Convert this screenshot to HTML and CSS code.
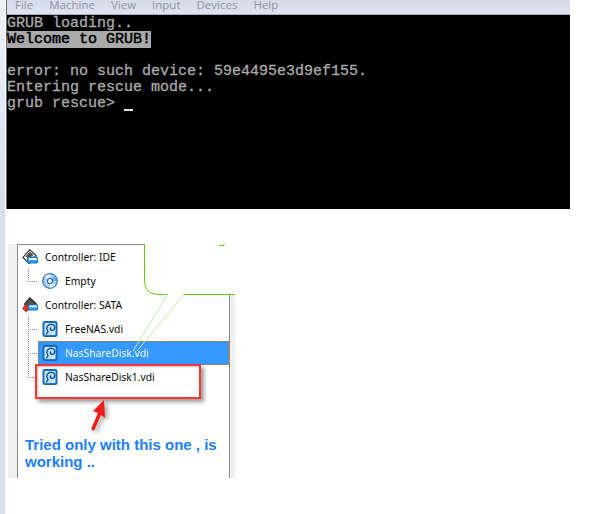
FILE: index.html
```html
<!DOCTYPE html>
<html lang="en">
<head>
<meta charset="utf-8">
<title>GRUB rescue</title>
<link rel="stylesheet" href="styles.css">
</head>
<body>
<svg class="defs" width="0" height="0" aria-hidden="true">
  <defs>
    <symbol id="disk" viewBox="0 0 16 16">
      <rect x="1" y="0.500" width="14" height="15" rx="1.500" fill="#1f7ad0" stroke="#17609f"/>
      <rect x="2.500" y="2" width="11" height="12" rx="1" fill="#c4e4fa"/>
      <path d="M4.300 13.500l1.700-3C4.300 8.500 4.300 5.300 7 3.800c2.700-1.300 5.800 0 5.800 2.700 0 2.200-2.200 3.200-3.800 2.500-1-.5-1-1.900.2-2.200" fill="none" stroke="#0f5596" stroke-width="1.400"/>
    </symbol>
    <symbol id="cd" viewBox="0 0 16 16">
      <circle cx="8" cy="8" r="7.300" fill="#a9d2f6" stroke="#2a78cc" stroke-width="1.300"/>
      <path d="M8 8L2.800 3.600A7 7 0 0 1 8 1.400z" fill="#f4fbff"/>
      <path d="M8 8l5.200 4.400A7 7 0 0 1 8 14.600z" fill="#e4f2fd"/>
      <path d="M8 8L14.600 8A7 7 0 0 0 12.800 3z" fill="#6faee8"/>
      <circle cx="8" cy="8" r="2.500" fill="#fff" stroke="#1f5fa8" stroke-width="1.100"/>
    </symbol>
    <symbol id="ide" viewBox="0 0 16 16">
      <path d="M0.800 8.500L7.800 0.800 14 6.500 7 14.500z" fill="#f2f3f4" stroke="#2c2c2c" stroke-width="1.100"/>
      <path d="M3.500 7.500L7.800 2.800 11.500 6 7 9.500z" fill="#4e5256"/>
      <rect x="5.500" y="8" width="10.500" height="6" rx="1.500" fill="#2f9bf0" stroke="#1568b8" stroke-width=".9"/>
      <rect x="7" y="9" width="7.500" height="2" fill="#fff"/>
    </symbol>
    <symbol id="sata" viewBox="0 0 16 16">
      <path d="M2.500 7L7.800 0.800 14 6.500 7 13z" fill="#4e5256" stroke="#1d1d1d" stroke-width="1.100"/>
      <path d="M0.500 11.500L4.200 6.800 7.500 11l-3.300 4z" fill="#e53020" stroke="#a51a10" stroke-width=".7"/>
      <rect x="6" y="7.500" width="10" height="5.500" rx="1.500" fill="#2f9bf0" stroke="#1568b8" stroke-width=".9"/>
      <rect x="7.500" y="8.500" width="7" height="1.800" fill="#fff"/>
    </symbol>
  </defs>
</svg>

<div class="strip"></div>

<main class="page">
  <section class="vm">
    <nav class="menu">
      <span>File</span>
      <span>Machine</span>
      <span>View</span>
      <span>Input</span>
      <span>Devices</span>
      <span>Help</span>
    </nav>
    <pre class="console">GRUB loading..
<mark class="hl">Welcome to GRUB!</mark>

error: no such device: 59e4495e3d9ef155.
Entering rescue mode...
grub rescue&gt; <i class="cursor"></i></pre>
  </section>

  <section class="panel">
    <div class="tree">
      <div class="row">
        <div class="item"><svg class="icon"><use href="#ide"/></svg><span>Controller: IDE</span></div>
      </div>
      <div class="row child">
        <i class="conn end"></i>
        <div class="item"><svg class="icon"><use href="#cd"/></svg><span>Empty</span></div>
      </div>
      <div class="row">
        <div class="item"><svg class="icon"><use href="#sata"/></svg><span>Controller: SATA</span></div>
      </div>
      <div class="row child">
        <i class="conn"></i>
        <div class="item"><svg class="icon"><use href="#disk"/></svg><span>FreeNAS.vdi</span></div>
      </div>
      <div class="row child">
        <i class="conn"></i>
        <div class="item selected"><svg class="icon"><use href="#disk"/></svg><span>NasShareDisk.vdi</span></div>
      </div>
      <div class="row child">
        <i class="conn end"></i>
        <div class="item"><svg class="icon"><use href="#disk"/></svg><span>NasShareDisk1.vdi</span></div>
      </div>
      <p class="note">Tried only with this one , is working ..</p>
    </div>

    <svg class="callout" width="227" height="234" viewBox="0 0 227 234" aria-hidden="true">
      <path d="M136 0V36Q136 50 150 50.500H227V0z" fill="#fff"/>
      <path d="M159.500 51L125 107M175.500 51L129 107" fill="none" stroke="#c9e8a8"/>
      <path d="M136.500 0V36Q136.500 50.500 150 50.500H159.500M175.500 50.500H227" fill="none" stroke="#66cc00"/>
      <path d="M211 1.500h5M216 1V0h1" fill="none" stroke="#66cc00"/>
    </svg>
    <div class="redbox"></div>
    <svg class="arrow" width="24" height="34" viewBox="0 0 24 34" aria-hidden="true">
      <path d="M14 0L3 11l5 2L1 29l3 2 7-16 4 3z" fill="#f01c1c"/>
    </svg>
  </section>
</main>
</body>
</html>
```
FILE: styles.css
```css
* { box-sizing: border-box; }
html, body { margin: 0; padding: 0; }
body {
  display: flex;
  width: 616px;
  height: 514px;
  overflow: hidden;
  background: #fff;
}
.defs { position: absolute; }
.strip {
  width: 5px;
  flex: none;
  background: linear-gradient(to bottom, #eef1f8 0, #d5dfee 200px);
}
.page { flex: 1; min-width: 0; }

.vm {
  margin-left: 1px;
  width: 564px;
  border-left: 1px solid #666;
}
.menu {
  display: flex;
  gap: 16px;
  height: 15px;
  padding-left: 8px;
  overflow: hidden;
  background: linear-gradient(to bottom, #d6dbeb, #dfe4f3);
  border-bottom: 1px solid #a9adc4;
  font: 11.5px/9px "Open Sans", sans-serif;
  color: #8f939e;
}
.console {
  margin: 0;
  height: 194px;
  padding-top: 1px;
  background: #000;
  color: #aaa;
  font: 15px/16px "Liberation Mono", monospace;
  -webkit-text-stroke: .3px #aaa;
}
.hl { background: #aaa; color: #000; -webkit-text-stroke: .5px #000; }
.cursor {
  display: inline-block;
  width: 9px;
  height: 2px;
  background: #e0e0e0;
  vertical-align: -4px;
}

.panel {
  position: relative;
  width: 227px;
  height: 234px;
  margin: 35px 0 0 3px;
  padding: 0 5px 0 9px;
  background: #f0f0f0;
}
.tree {
  height: 234px;
  background: #fff;
  border: 1px solid #8a8a8a;
  border-bottom: 0;
  font: 10.3px/24px "Noto Sans", sans-serif;
  color: #0a0a0a;
}
.row { display: flex; height: 24px; }
.child { padding-left: 10px; }
.conn {
  flex: none;
  width: 10px;
  height: 24px;
  background:
    repeating-linear-gradient(to bottom, #888 0 1px, transparent 1px 2px) left top / 1px 100% no-repeat,
    repeating-linear-gradient(to right, #888 0 1px, transparent 1px 2px) left center / 100% 1px no-repeat;
}
.conn.end { height: 13px; background-position: left top, left bottom; }
.item {
  flex: 1;
  display: flex;
  align-items: center;
  gap: 7px;
  padding-left: 4px;
  border: 1px solid transparent;
  border-width: 1px 1px 1px 0;
}
.icon { width: 16px; height: 16px; flex: none; }
.selected {
  background: #3399ff;
  color: #eaf4ff;
  border: 1px dotted #d0701a;
  padding-left: 3px;
}
.note {
  margin: 47px 0 0 7px;
  width: 200px;
  font: bold 15px/17px "Liberation Sans", sans-serif;
  color: #1a80ff;
}
.callout { position: absolute; left: 0; top: 0; }
.redbox {
  position: absolute;
  left: 27px;
  top: 120px;
  width: 166px;
  height: 35px;
  border: 2px solid #ff3333;
  box-shadow: 3px 3px 4px rgba(0, 0, 0, .4), inset 1px 1px 2px rgba(0, 0, 0, .25);
}
.arrow {
  position: absolute;
  left: 82px;
  top: 156px;
  filter: drop-shadow(3px 2px 2px rgba(0, 0, 0, .35));
}
```
